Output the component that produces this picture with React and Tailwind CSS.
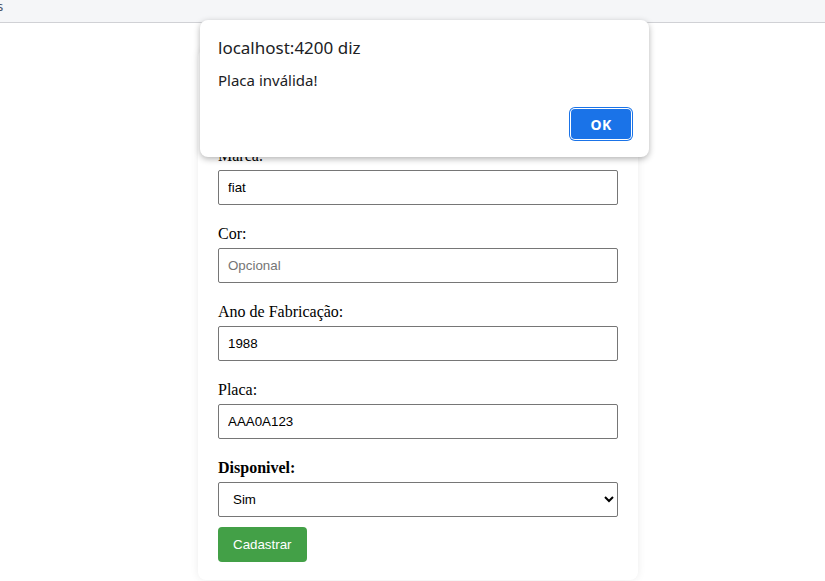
import React from 'react'

const fields = [
    { label: 'Modelo:', value: 'uno' },
    { label: 'Marca:', value: 'fiat' },
    { label: 'Cor:', value: '', placeholder: 'Opcional' },
    { label: 'Ano de Fabricação:', value: '1988' },
    { label: 'Placa:', value: 'AAA0A123' },
]

export default function App() {
    return (
        <div className="relative min-h-[581px] bg-white font-['Liberation_Serif',serif] text-black">

            {/* Browser strip */}
            <div className="h-[23px] bg-[#f5f6f8] border-b border-[#d0d1d5] font-['Noto_Sans',sans-serif] text-[13px] leading-[12px] text-[#4a5568]">
                <span className="-ml-[3px]">s</span>
            </div>

            {/* Form card */}
            <div className="ml-[198px] mt-[26px] w-[440px] rounded-lg bg-white px-5 pt-5 pb-[18px] shadow-[0_0_8px_rgba(0,0,0,0.08)]">
                <form onSubmit={e => e.preventDefault()}>
                    {fields.map(f => (
                        <div key={f.label} className="mb-5">
                            <label className="block mb-[5px] text-[16px] leading-[18px]">{f.label}</label>
                            <input
                                type="text"
                                defaultValue={f.value}
                                placeholder={f.placeholder}
                                className="block w-[400px] h-[35px] px-[9px] border border-[#767676] rounded-[2px] bg-white font-['Liberation_Sans',sans-serif] text-[13.33px] text-black placeholder:text-[#757575] outline-none"
                            />
                        </div>
                    ))}

                    <div className="mb-[10px]">
                        <label className="block mb-[5px] text-[16px] leading-[18px] font-bold">Disponivel:</label>
                        <select
                            defaultValue="sim"
                            className="block w-[400px] h-[35px] px-[10px] border border-[#767676] rounded-[2px] bg-white font-['Liberation_Sans',sans-serif] text-[13.33px] text-black outline-none"
                        >
                            <option value="sim">Sim</option>
                            <option value="nao">Não</option>
                        </select>
                    </div>

                    <button
                        type="submit"
                        className="h-[35px] px-[15px] rounded-[4px] bg-[#43a047] font-['Liberation_Sans',sans-serif] text-[13.33px] text-white"
                    >
                        Cadastrar
                    </button>
                </form>
            </div>

            {/* Alert dialog */}
            <div className="absolute left-[200px] top-[20px] w-[449px] h-[137px] rounded-lg bg-white shadow-[0_2px_6px_rgba(0,0,0,0.3)] font-['Noto_Sans',sans-serif]">
                <div className="px-[18px] pt-[15px]">
                    <div className="text-[17px] leading-[26px] text-[#202124]">localhost:4200 diz</div>
                    <div className="mt-[9px] text-[15px] leading-[20px] text-[#202124]">Placa inválida!</div>
                </div>
                <div className="flex justify-end pr-[18px] pt-[19px]">
                    <button className="w-[60px] h-[30px] rounded-[4px] bg-[#1a73e8] text-[14px] font-bold tracking-wide text-white ring-1 ring-[#1a73e8] ring-offset-[1px] ring-offset-white">
                        OK
                    </button>
                </div>
            </div>
        </div>
    )
}
